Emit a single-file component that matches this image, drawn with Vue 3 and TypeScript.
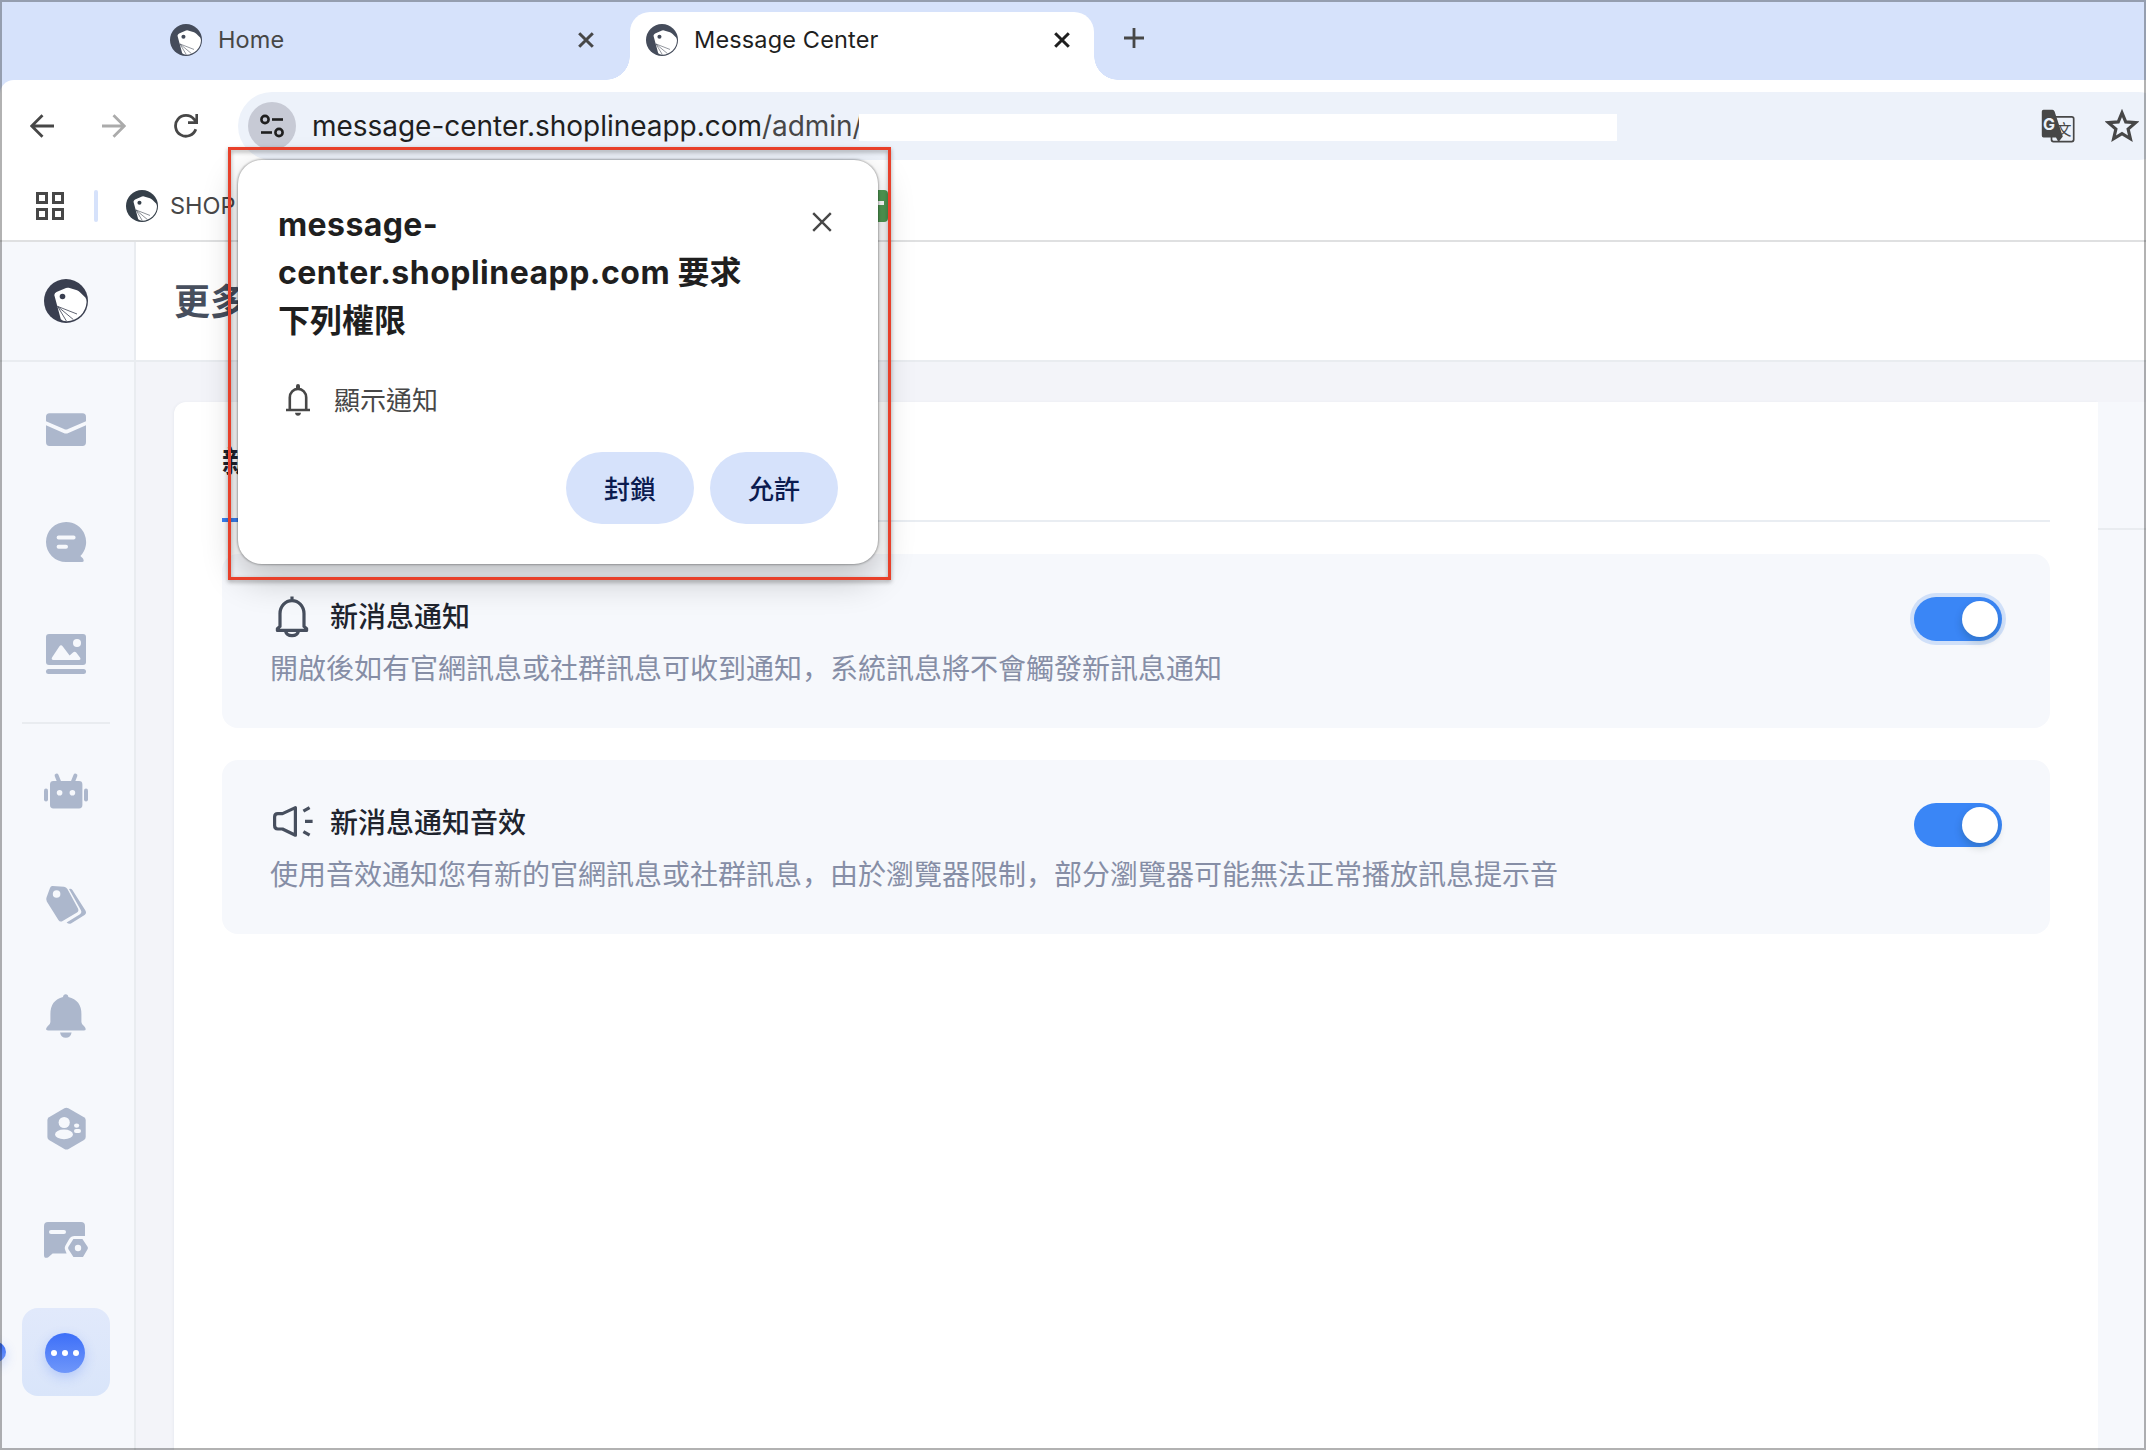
<script setup lang="ts">
import { ref } from 'vue'

interface Setting {
  id: string
  title: string
  desc: string
  on: boolean
  focused: boolean
}

const tabs = [
  { title: 'Home', active: false },
  { title: 'Message Center', active: true },
]

const settings = ref<Setting[]>([
  {
    id: 'bell',
    title: '新消息通知',
    desc: '開啟後如有官網訊息或社群訊息可收到通知，系統訊息將不會觸發新訊息通知',
    on: true,
    focused: true,
  },
  {
    id: 'sound',
    title: '新消息通知音效',
    desc: '使用音效通知您有新的官網訊息或社群訊息，由於瀏覽器限制，部分瀏覽器可能無法正常播放訊息提示音',
    on: true,
    focused: false,
  },
])
</script>

<template>
  <div class="window">
    <svg class="defs" aria-hidden="true">
      <symbol id="bird" viewBox="0 0 44 44">
        <circle cx="22" cy="22" r="22" fill="currentColor" />
        <path d="M10.3 16 Q10.6 14 12.5 13 L22 9 Q23.3 8.4 24.8 8.8 L33 11.2 Q35 11.9 36.2 13.4 L41.4 18.4 Q42.6 20 42.6 23 Q42 31 36.5 36.5 Q30 42.4 22.5 42.2 Q18.5 42 16.8 40.2 Z" fill="#fff" />
        <circle cx="18.5" cy="17.5" r="2.8" fill="currentColor" />
        <path d="M13.6 27.4 L22.4 42 M13.6 27.4 L29.4 40.6 M13.6 27.4 L33 35" stroke="currentColor" stroke-width="0.8" fill="none" />
      </symbol>
    </svg>

    <header class="tabstrip">
      <div v-for="tab in tabs" :key="tab.title" class="tab" :class="{ active: tab.active }">
        <svg class="favicon"><use href="#bird" /></svg>
        <span class="tab-title">{{ tab.title }}</span>
        <svg class="tab-close" viewBox="0 0 16 16"><path d="M1.2 1.2 L14.8 14.8 M14.8 1.2 L1.2 14.8" /></svg>
      </div>
      <svg class="tab-add" viewBox="0 0 20 20"><path d="M10 0 V20 M0 10 H20" /></svg>
    </header>

    <div class="toolbar">
      <svg class="nav back" viewBox="0 0 24 24"><path d="M24 12 H2 M12.5 1.2 L1.7 12 L12.5 22.8" /></svg>
      <svg class="nav forward" viewBox="0 0 24 24"><path d="M0 12 H22 M11.5 1.2 L22.3 12 L11.5 22.8" /></svg>
      <svg class="nav reload" viewBox="0 0 24 24"><path d="M21.8 15.2 A10.4 10.4 0 1 1 20 5.2 L22.8 8.4 M22.8 0 V8.6 H14" /></svg>
      <div class="omnibox">
        <div class="site-chip">
          <svg viewBox="0 0 26 24" width="26" height="24">
            <g fill="none" stroke="#1f1f1f" stroke-width="2.6">
              <circle cx="6" cy="5.5" r="3.6" /><path d="M13 5.5 H24" />
              <circle cx="20" cy="18.5" r="3.6" /><path d="M2 18.5 H13" />
            </g>
          </svg>
        </div>
        <span class="url">message-center.shoplineapp.com<span class="path">/admin/</span></span>
        <span class="blank"></span>
        <svg class="translate" viewBox="0 0 34 34">
          <rect x="10.5" y="7.8" width="22.2" height="24.8" rx="2" fill="none" stroke="#474747" stroke-width="1.7" />
          <path d="M2.5 .8 H11.4 Q13 .8 13.6 2.5 L21.8 27.5 L17.5 33 L15 28.6 H2.5 Q.8 28.6 .8 26.6 V2.5 Q.8 .8 2.5 .8 Z" fill="#474747" />
          <text x="15.6" y="25.6" font-size="15" class="zh" fill="#474747">文</text>
          <text x="2" y="20.8" font-size="16" font-weight="700" fill="#edf2fa">G</text>
        </svg>
        <svg class="star" viewBox="0 0 30 30"><path d="M15 3.4 L18.3 11.4 L27 12 L20.4 17.7 L22.4 26.3 L15 21.8 L7.6 26.3 L9.6 17.7 L3 12 L11.7 11.4 Z" /></svg>
      </div>
    </div>

    <div class="bookmarks">
      <svg class="apps" viewBox="0 0 28 28">
        <path d="M1.5 1.5 h9 v9 h-9 z M17.5 1.5 h9 v9 h-9 z M1.5 17.5 h9 v9 h-9 z M17.5 17.5 h9 v9 h-9 z" />
      </svg>
      <span class="sep"></span>
      <svg class="mark-icon"><use href="#bird" /></svg>
      <span class="mark-title">SHOP</span>
      <span class="sheet"><i></i></span>
    </div>

    <div class="app">
      <aside class="sidebar">
        <div class="brand"><svg width="44" height="44"><use href="#bird" /></svg></div>
        <nav class="menu">
          <a class="item">
            <svg viewBox="0 0 44 44">
              <path d="M2 13.2 V9 Q2 5.3 5.5 5.3 H38.5 Q42 5.3 42 9 V13.2 L24 21 Q22 22 20 21 Z" />
              <path d="M2 17.2 L19.6 25 Q22 26 24.4 25 L42 17.2 V34 Q42 38 38.5 38 H5.5 Q2 38 2 34 Z" />
            </svg>
          </a>
          <a class="item">
            <svg viewBox="0 0 44 44">
              <path d="M22 2 A20 20 0 0 1 36.4 36 L39 38.6 Q40.8 41.9 38 42 H22 A20 20 0 0 1 22 2 Z" />
              <path class="cut" d="M14.6 17.4 H29.6 M14.6 26.8 H22" />
            </svg>
          </a>
          <a class="item">
            <svg viewBox="0 0 44 44">
              <rect x="2" y="2" width="40" height="31" rx="3" />
              <rect x="2" y="37" width="40" height="5" rx="2.5" />
              <circle cx="33" cy="11" r="4" class="hole" />
              <path class="hole" d="M8 25.6 L15.3 14.6 Q17 12 18.8 14.6 L25.6 23.4 L29 20.4 Q30.8 18.8 32.2 20.6 L36 25.6 Q37.4 28 35 28 H9.4 Q7 28 8 25.6 Z" />
            </svg>
          </a>
          <span class="rule"></span>
          <a class="item">
            <svg viewBox="0 0 44 44">
              <rect x="6" y="11" width="32.4" height="27.4" rx="3.4" />
              <rect x="0" y="18.4" width="4" height="13" rx="2" /><rect x="40" y="18.4" width="4" height="13" rx="2" />
              <path class="line" d="M12.6 5.6 L15 11.4 M31.4 5.6 L29 11.4" />
              <circle cx="15.6" cy="22.8" r="2.8" class="hole" /><circle cx="28.4" cy="22.8" r="2.8" class="hole" />
            </svg>
          </a>
          <a class="item">
            <svg viewBox="0 0 44 44">
              <path d="M8.6 4 L20 4.8 Q22.2 5 23.4 7 L34 26.4 Q35.2 29 33 30.4 L18.6 39 Q16 40.4 14.4 38 L2.8 19.4 Q1.6 17.4 2.6 15.2 L6 6 Q6.8 3.8 8.6 4 Z" />
              <path d="M25 7 Q27 6 28.4 8 L41.4 28.6 Q43 31.4 40.6 33 L27 41.4 Q24.6 42.2 22.6 40.4 L36 32.2 Q38.2 30.6 36.8 28 Z" />
              <circle cx="12.6" cy="12" r="3.8" class="hole" />
            </svg>
          </a>
          <a class="item">
            <svg viewBox="0 0 44 44">
              <path d="M19 3 Q19.4 .2 21.7 .2 Q24 .2 24.4 3 Q37.4 6.2 37.4 20 V28 Q37.4 30.6 40.4 32.6 Q43.4 36.5 39.6 36.5 H4 Q.4 36.5 3.4 32.6 Q6.4 30.6 6.4 28 V20 Q6.4 6.2 19 3 Z" />
              <path d="M16 38.4 H27.6 Q26.6 43.7 21.8 43.7 Q17 43.7 16 38.4 Z" />
            </svg>
          </a>
          <a class="item">
            <svg viewBox="0 0 44 44">
              <path d="M20.4 2.2 Q22.4 1.2 24.4 2.2 L40 11.2 Q41.7 12.2 41.7 14 V31 Q41.7 33 40 34 L24.6 43 Q22.4 44 20.4 43 L5 34 Q3.4 33 3.4 31 V14 Q3.4 12.2 5 11.2 Z" />
              <circle cx="20.2" cy="16.5" r="5.6" class="hole" /><ellipse cx="20" cy="28.4" rx="9" ry="4.8" class="hole" />
              <ellipse cx="32.6" cy="19.6" rx="2.6" ry="2.2" class="hole" /><rect x="30" y="23" width="7" height="4" rx="2" class="hole" />
            </svg>
          </a>
          <a class="item">
            <svg viewBox="0 0 44 44">
              <path d="M4 4 H37 Q41 4 41 8 V18 H30.5 Q27 18 25.2 21 L21.2 28 Q20.2 30 21.2 32 L22.6 35.6 H8.6 L4 39.4 Q0 41 0 37 V8 Q0 4 4 4 Z" />
              <path d="M29.4 21 H38.4 L43.4 28.4 Q44.4 30 43.4 31.6 L39 38.9 H29.4 L24.6 31.6 Q23.6 30 24.6 28.4 Z" />
              <path class="cut" d="M7 14 H20" />
              <circle cx="34" cy="30" r="3.2" class="hole" />
            </svg>
          </a>
          <a class="item active">
            <span class="edge-dot"></span>
            <span class="more"><i></i><i></i><i></i></span>
          </a>
        </nav>
      </aside>

      <main class="main">
        <div class="page-head"><h1>更多</h1></div>
        <div class="content">
          <section class="panel">
            <div class="panel-tabs"><span class="panel-tab">新</span></div>
            <div v-for="s in settings" :key="s.id" class="setting">
              <div class="info">
                <div class="row">
                  <svg v-if="s.id === 'bell'" class="s-icon" viewBox="0 0 44 44">
                    <path d="M22 2.6 V7.6 M10 32.4 V19.6 A12 13 0 0 1 34 19.6 V32.4 L36.6 34.8 V36.4 H7.4 V34.8 Z M15.4 36.8 Q16.6 41.6 22 41.6 Q27.4 41.6 28.6 36.8" />
                  </svg>
                  <svg v-else class="s-icon" viewBox="0 0 44 44">
                    <path d="M12.5 13.6 H7.8 Q4.6 13.6 4.6 17 V25.6 Q4.6 29 7.8 29 H12.5 L25.4 35.2 V7.6 Z M33.4 11.2 L39.6 7.6 M35 21.4 H42.6 M33.4 31.6 L39.6 35.2" />
                  </svg>
                  <h2>{{ s.title }}</h2>
                </div>
                <p>{{ s.desc }}</p>
              </div>
              <button class="switch" :class="{ on: s.on, focused: s.focused }" @click="s.on = !s.on"><i></i></button>
            </div>
          </section>
          <div class="gutter"><span></span></div>
        </div>
      </main>
    </div>

    <div class="dialog">
      <div class="dialog-head">
        <h3>message-<br /><span class="host">center.shoplineapp.com</span> 要求<br />下列權限</h3>
        <svg class="dialog-close" viewBox="0 0 20 20"><path d="M1.2 1.2 L18.8 18.8 M18.8 1.2 L1.2 18.8" /></svg>
      </div>
      <div class="perm">
        <svg viewBox="0 0 24 32" width="24" height="32">
          <path d="M0 26 H24 M3.8 26 V13.5 A8.2 8.6 0 0 1 20.2 13.5 V26" fill="none" stroke="#474747" stroke-width="2.6" />
          <path d="M10 5 V2 Q10 0 12 0 Q14 0 14 2 V5 Z M9 28.8 H15 Q14.6 31.8 12 31.8 Q9.4 31.8 9 28.8 Z" fill="#474747" />
        </svg>
        <span>顯示通知</span>
      </div>
      <div class="actions"><button>封鎖</button><button>允許</button></div>
    </div>
    <div class="highlight"></div>
    <div class="frame"></div>
  </div>
</template>

<style>
html, body { margin: 0; overflow: hidden; }
</style>

<style scoped>
* { box-sizing: border-box; }
.window {
  position: relative;
  width: 2146px;
  height: 1450px;
  overflow: hidden;
  background: #d6e2fb;
  display: flex;
  flex-direction: column;
  font-family: Inter, "Noto Sans CJK TC", sans-serif;
}
.defs { position: absolute; width: 0; height: 0; }
svg { display: block; flex: none; }
h1, h2, h3, p { margin: 0; }
i { display: block; }
button { border: 0; padding: 0; font-family: inherit; }

.tabstrip { height: 80px; flex: none; display: flex; padding: 12px 0 0 154px; }
.tab { position: relative; height: 68px; display: flex; padding: 0 24px 0 16px; color: #474747; }
.tab:first-child { width: 464px; margin-right: 12px; }
.tab.active { width: 464px; background: #fff; border-radius: 20px 20px 0 0; color: #1f1f1f; }
.tab.active::before, .tab.active::after { content: ""; position: absolute; bottom: 0; width: 24px; height: 24px; }
.tab.active::before { left: -24px; background: radial-gradient(circle at 0 0, transparent 23.5px, #fff 24px); }
.tab.active::after { right: -24px; background: radial-gradient(circle at 100% 0, transparent 23.5px, #fff 24px); }
.favicon { width: 32px; height: 32px; margin-top: 12px; color: #454c5b; }
.tab-title { margin-left: 16px; flex: 1; font-size: 23.5px; line-height: 56px; letter-spacing: 0.15px; }
.tab-close { width: 16px; height: 16px; margin-top: 20px; fill: none; stroke: currentColor; stroke-width: 3; }
.tab-add { width: 20px; height: 20px; margin: 16px 0 0 30px; fill: none; stroke: #474747; stroke-width: 2.8; }

.toolbar { height: 80px; flex: none; background: #fff; border-radius: 14px 0 0 0; padding: 12px 0 0 30px; display: flex; }
.nav { width: 24px; height: 24px; margin-top: 22px; fill: none; stroke: #474747; stroke-width: 2.8; }
.forward { margin-left: 48px; stroke: #ababab; }
.reload { margin-left: 48px; }
.omnibox { margin-left: 40px; width: 1934px; flex: none; height: 68px; border-radius: 34px; background: #edf2fa; display: flex; align-items: center; padding-left: 10px; }
.site-chip { width: 48px; height: 48px; border-radius: 50%; background: #c7cad5; display: flex; align-items: center; justify-content: center; flex: none; }
.url { margin-left: 16px; width: 547px; flex: none; font-size: 28px; line-height: 68px; letter-spacing: -0.03px; color: #1f1f1f; white-space: nowrap; }
.path { color: #474747; }
.blank { width: 758px; height: 27px; margin-top: 3px; background: #fff; flex: none; }
.translate { width: 34px; height: 34px; margin-left: 424px; }
.zh { font-family: "Noto Sans CJK TC", sans-serif; }
.star { width: 34px; height: 34px; margin: 0 0 0 30px; fill: none; stroke: #474747; stroke-width: 2.8; }

.bookmarks { height: 82px; flex: none; background: #fff; border-bottom: 2px solid #dfe0e1; display: flex; padding: 30px 0 0 36px; }
.apps { width: 28px; height: 28px; margin-top: 2px; fill: none; stroke: #474747; stroke-width: 3; }
.sep { width: 4px; height: 32px; margin-left: 30px; border-radius: 2px; background: #d6e2fb; }
.mark-icon { width: 32px; height: 32px; margin-left: 28px; color: #353f49; }
.mark-title { margin-left: 12px; width: 690px; font-size: 23.5px; line-height: 32px; color: #474747; }
.sheet { width: 28px; height: 32px; background: #519b54; border-radius: 4px; padding: 11px 4px; }
.sheet i { height: 4px; background: #fff; }

.app { flex: 1; display: flex; min-height: 0; }
.sidebar { width: 136px; flex: none; background: #f6f8fc; border-right: 2px solid #e9ecf0; }
.brand { height: 120px; border-bottom: 2px solid #e9ecf0; display: flex; padding: 37px 0 0 44px; color: #3a3f50; }
.menu { display: flex; flex-direction: column; gap: 24px; padding: 24px 0 0 22px; }
.item { position: relative; width: 88px; height: 88px; display: flex; align-items: center; justify-content: center; border-radius: 16px; }
.item svg { width: 44px; height: 44px; fill: #acb7cc; }
.item .hole { fill: #f6f8fc; }
.item .cut { fill: none; stroke: #f6f8fc; stroke-width: 4; stroke-linecap: round; }
.item .line { fill: none; stroke: #acb7cc; stroke-width: 4; stroke-linecap: round; }
.rule { width: 88px; height: 2px; background: #e9ecf0; }
.item.active { background: linear-gradient(#e1e9fb, #d9e5fa); }
.more { width: 40px; height: 40px; margin: 2px 2px 0 0; border-radius: 50%; background: linear-gradient(#3d6ff8, #6f97fa); box-shadow: 0 4px 12px rgba(61, 111, 248, 0.25); display: flex; align-items: center; justify-content: center; gap: 5px; }
.more i { width: 6px; height: 6px; border-radius: 50%; background: #fff; }
.edge-dot { position: absolute; left: -36px; top: 34px; width: 20px; height: 20px; border-radius: 50%; background: linear-gradient(#3d6ff8, #6f97fa); box-shadow: 0 4px 12px rgba(61, 111, 248, 0.25); }

.main { flex: 1; display: flex; flex-direction: column; background: #f3f4f9; font-family: Inter, "Noto Sans CJK SC", sans-serif; }
.page-head { height: 120px; flex: none; background: #fff; border-bottom: 2px solid #e9ecf0; padding-left: 38px; }
h1 { font-size: 36px; font-weight: 600; line-height: 119px; padding-top: 1px; width: 72px; color: #474f5e; }
.content { flex: 1; display: flex; padding: 40px 0 0 38px; }
.panel { width: 1924px; background: #fff; border-radius: 12px 0 0 0; padding: 0 48px; box-shadow: -1px 0 3px rgba(60, 70, 100, 0.05); }
.panel-tabs { height: 120px; border-bottom: 2px solid #e9edf2; display: flex; }
.panel-tab { width: 150px; height: 120px; border-bottom: 4px solid #3a82f5; font-size: 30px; font-weight: 700; line-height: 118px; color: #20242e; }
.setting { height: 174px; margin-top: 32px; border-radius: 16px; background: #f6f8fc; display: flex; justify-content: space-between; padding: 43px 48px 0; }
.info { display: flex; flex-direction: column; }
.row { display: flex; height: 40px; align-items: center; margin-top: -1px; }
.s-icon { width: 44px; height: 44px; fill: none; stroke: #474f5e; stroke-width: 3.2; stroke-linejoin: round; }
h2 { margin-left: 16px; padding-top: 1px; font-size: 28px; font-weight: 500; line-height: 40px; color: #20242e; }
p { margin-top: 13px; font-size: 28px; line-height: 40px; color: #868ea6; white-space: nowrap; }
.switch { width: 88px; height: 44px; border-radius: 22px; background: #bfc5d2; padding: 4px; display: flex; }
.switch.on { background: #3a86f6; justify-content: flex-end; }
.switch.focused { box-shadow: 0 0 0 4px #d0e0f9; }
.switch i { width: 36px; height: 36px; border-radius: 50%; background: #fff; box-shadow: 0 4px 8px rgba(0, 35, 11, 0.2); }
.gutter { flex: 1; background: #f6f8fc; padding-top: 126px; }
.gutter span { display: block; height: 2px; background: #e9ecf0; }

.dialog {
  position: absolute; left: 238px; top: 160px; width: 640px; height: 404px;
  border-radius: 24px; background: #fff; padding: 40px 40px 40px 40px;
  box-shadow: 0 0 2px 1px rgba(0, 0, 0, 0.28), 0 14px 36px rgba(0, 0, 0, 0.24);
  display: flex; flex-direction: column;
}
.dialog-head { display: flex; justify-content: space-between; height: 144px; }
h3 { padding-top: 1px; font-size: 32px; line-height: 48px; font-weight: 700; color: #1f1f1f; white-space: nowrap; }
h3::first-line { letter-spacing: 0.4px; }
.host { display: inline-block; width: 392px; letter-spacing: 0.48px; }
.dialog-close { width: 20px; height: 20px; margin: 12px 6px 0 0; fill: none; stroke: #474747; stroke-width: 2.4; }
.perm { margin-top: 40px; height: 32px; display: flex; align-items: center; padding-left: 8px; font-size: 26px; line-height: 32px; color: #474747; }
.perm span { margin-left: 24px; padding-top: 2px; }
.actions { margin-top: 36px; display: flex; justify-content: flex-end; gap: 16px; }
.actions button { width: 128px; height: 72px; flex: none; border-radius: 36px; padding-bottom: 2px; background: #d6e2fb; font-size: 26px; font-weight: 500; color: #0b1b4f; }
.highlight { position: absolute; left: 228px; top: 147px; width: 663px; height: 433px; border: 3px solid #e8402a; filter: drop-shadow(0 2px 2px rgba(0, 0, 0, 0.35)); }
.frame { position: absolute; inset: 0; border: 2px solid rgba(0, 0, 0, 0.3); pointer-events: none; }
</style>
